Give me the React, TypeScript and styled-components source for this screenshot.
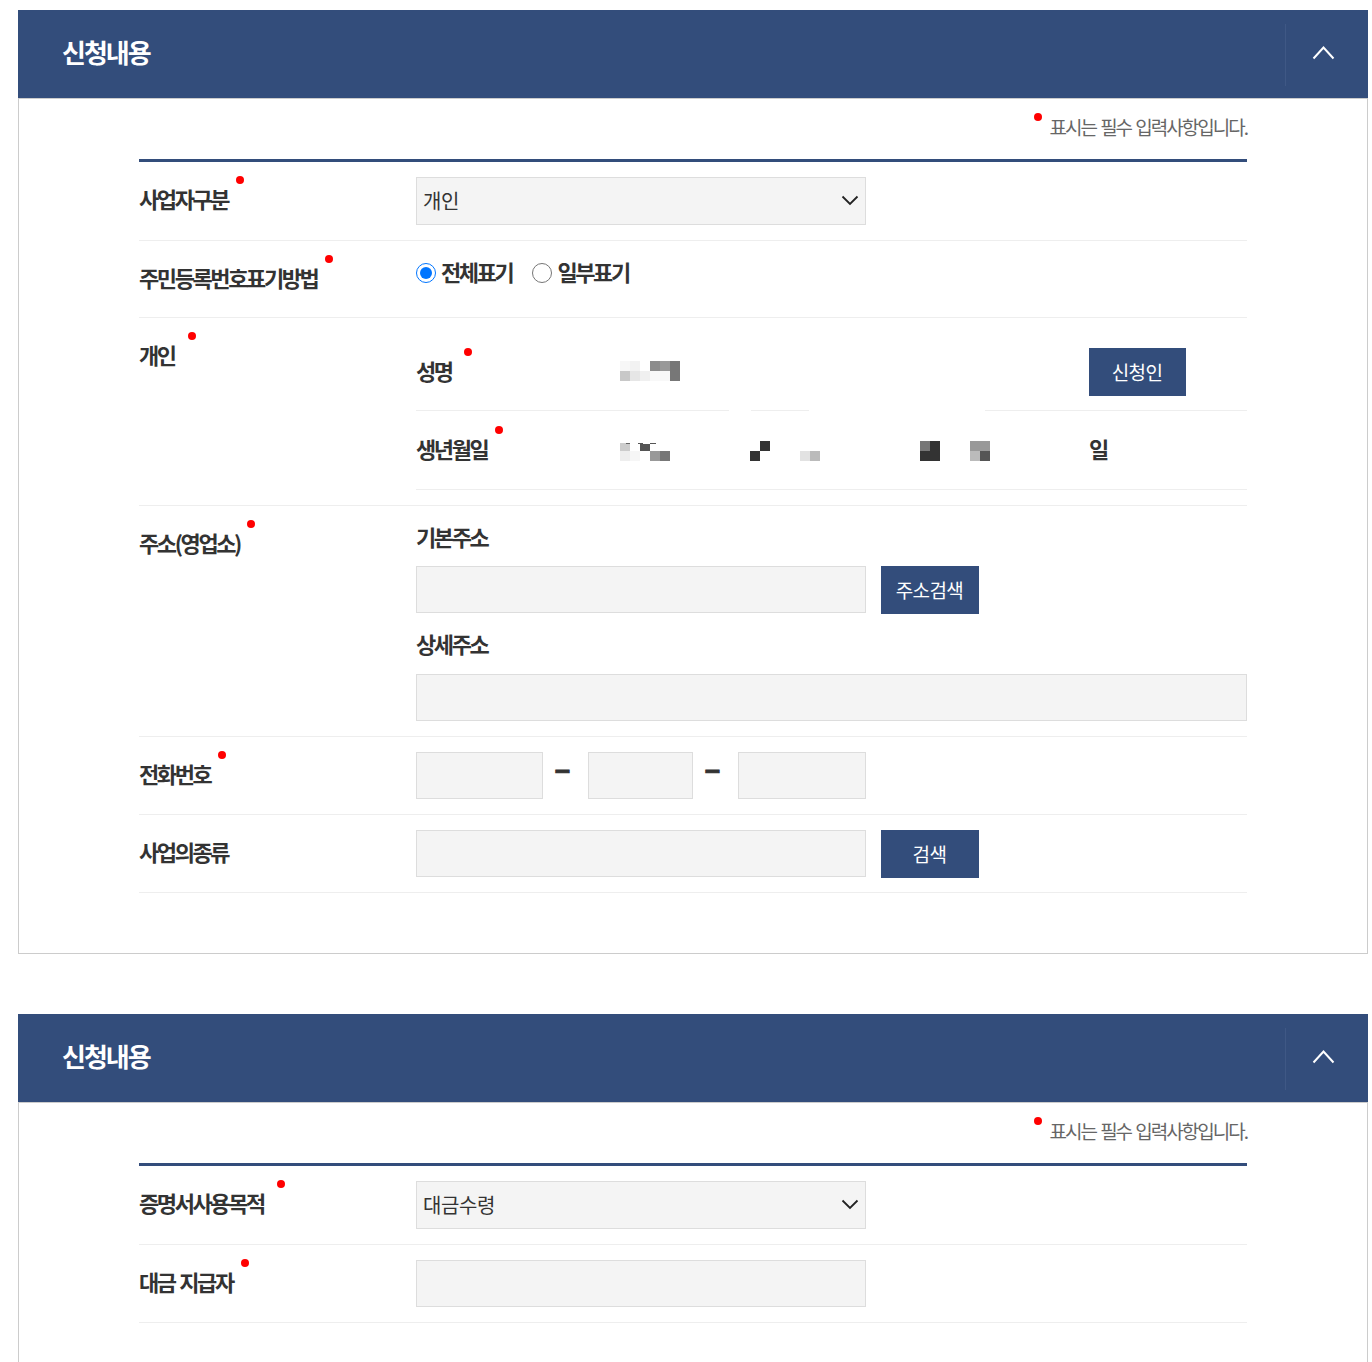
import React from "react";
import styled, { createGlobalStyle } from "styled-components";

const NAVY = "#334d7b";
const FONT = `"Noto Sans CJK KR", "Noto Sans", sans-serif`;

const Global = createGlobalStyle`
  html, body { margin: 0; padding: 0; height: 1362px; overflow: hidden; background: #fff; }
  body { font-family: ${FONT}; color: #333; }
  * { box-sizing: border-box; }
`;

const Page = styled.div`
  padding: 10px 4px 0 18px;
`;
const Section = styled.section`
  margin-bottom: 60px;
`;
const Header = styled.header`
  height: 88px;
  background: ${NAVY};
  display: flex;
  align-items: center;
  justify-content: space-between;
  padding-left: 44px;
`;
const Title = styled.h2`
  margin: 0 0 4px;
  font-size: 26px;
  font-weight: 700;
  letter-spacing: -2px;
  color: #fff;
  line-height: 1;
`;
const Toggle = styled.button`
  width: 83px;
  height: 62px;
  margin-top: 2px;
  padding: 0 8px 6px 0;
  background: transparent;
  border: 0;
  border-left: 1px solid #3f5885;
  display: flex;
  align-items: center;
  justify-content: center;
`;
const Body = styled.div`
  border: 1px solid #ccc;
  padding: 0 120px 60px;
`;
const Note = styled.p`
  margin: 0;
  height: 60px;
  display: flex;
  justify-content: flex-end;
  align-items: center;
  padding-bottom: 6px;
  font-size: 19px;
  letter-spacing: -2px;
  word-spacing: 2px;
  color: #666;
`;
const NoteText = styled.span`
  position: relative;
  &::before {
    content: "";
    position: absolute;
    left: -15px;
    top: 0;
    width: 8px;
    height: 8px;
    border-radius: 50%;
    background: #f00;
  }
`;
const Table = styled.div`
  border-top: 3px solid ${NAVY};
`;
const Row = styled.div`
  display: grid;
  grid-template-columns: 277px 1fr;
  border-bottom: 1px solid #eee;
`;
const Label = styled.div`
  padding-top: 20px;
  line-height: 32px;
  height: 52px;
`;
const LabelText = styled.span<{ $required?: boolean; $dot?: number }>`
  position: relative;
  display: inline-block;
  font-size: 22px;
  font-weight: 700;
  letter-spacing: -2.4px;
  word-spacing: 2px;
  color: #333;
  ${(p) =>
    p.$required &&
    `&::after {
      content: "";
      position: absolute;
      right: ${-(p.$dot ?? 16)}px;
      top: -6px;
      width: 8px;
      height: 8px;
      border-radius: 50%;
      background: #f00;
    }`}
`;
const Cell = styled.div`
  padding: 15px 0;
`;
const TightCell = styled(Cell)`
  padding-bottom: 14px;
`;
const RadioCell = styled.div`
  height: 76px;
  padding-top: 17px;
  display: flex;
  align-items: flex-start;
  gap: 20px;
`;
const RadioLabel = styled.label`
  display: flex;
  align-items: center;
  gap: 5px;
  height: 30px;
  font-size: 22px;
  font-weight: 700;
  letter-spacing: -2.4px;
  color: #333;
`;
const RadioText = styled.span`
  margin-bottom: 4px;
`;
const Radio = styled.input.attrs({ type: "radio" })`
  width: 20px;
  height: 20px;
  margin: 0;
  accent-color: #0075ff;
`;
const SelectWrap = styled.div`
  position: relative;
  width: 450px;
  height: 48px;
`;
const Select = styled.select`
  appearance: none;
  width: 100%;
  height: 100%;
  padding: 0 6px 2px;
  background: #f4f4f4;
  border: 1px solid #ddd;
  border-radius: 0;
  font-family: ${FONT};
  font-size: 20px;
  letter-spacing: -0.4px;
  color: #333;
`;
const SelectArrow = styled.svg`
  position: absolute;
  right: 7px;
  top: 18px;
  pointer-events: none;
`;
const Input = styled.input<{ $w?: number }>`
  display: block;
  width: ${(p) => (p.$w ? `${p.$w}px` : "100%")};
  height: 47px;
  background: #f4f4f4;
  border: 1px solid #ddd;
  border-radius: 0;
  padding: 0 8px;
  font-family: ${FONT};
  font-size: 20px;
`;
const Button = styled.button`
  width: 98px;
  height: 48px;
  padding: 0 1px 2px 0;
  background: ${NAVY};
  border: 0;
  border-radius: 0;
  color: #fff;
  font-family: ${FONT};
  font-size: 19px;
  letter-spacing: -0.6px;
`;
const FieldRow = styled.div`
  display: flex;
  align-items: flex-start;
  gap: 15px;
`;
const PhoneRow = styled.div`
  display: flex;
  align-items: flex-start;
`;
const Dash = styled.span`
  width: 45px;
  height: 30px;
  padding-right: 6px;
  display: flex;
  justify-content: center;
  align-items: center;
  font-size: 30px;
  font-weight: 700;
  line-height: 1;
  color: #333;
  -webkit-text-stroke: 1px #333;
`;
const NameRow = styled.div`
  display: flex;
  height: 93px;
`;
const Seg = styled.div<{ $w: number; $gap?: number }>`
  width: ${(p) => p.$w}px;
  margin-left: ${(p) => p.$gap ?? 0}px;
  border-bottom: 1px solid #eee;
  display: flex;
  align-items: flex-start;
`;
const SubLabel = styled.div`
  width: 204px;
  padding-top: 36px;
  line-height: 32px;
`;
const NameValue = styled.svg`
  margin-top: 43px;
`;
const ApplicantButton = styled(Button)`
  width: 97px;
  margin: 30px 0 0 104px;
`;
const BirthRow = styled.div`
  display: grid;
  grid-template-columns: 204px 130px 50px 120px 50px 119px auto;
  align-items: center;
  height: 79px;
  margin-bottom: 15px;
  padding-top: 1px;
  border-bottom: 1px solid #eee;
`;
const BirthLabel = styled.div`
  line-height: 32px;
  margin-bottom: 2px;
`;
const AddrCell = styled.div`
  padding: 14px 0 15px;
`;
const AddrLabel = styled.div<{ $top?: number; $bottom: number }>`
  margin-top: ${(p) => p.$top ?? 0}px;
  margin-bottom: ${(p) => p.$bottom}px;
  line-height: 32px;
`;

type Cellv = [number, number, string, number?, number?];
const Mosaic = ({ w, cells, as: Comp = "svg" as any }: { w: number; cells: Cellv[]; as?: any }) => (
  <Comp width={w} height={20} viewBox={`0 0 ${w} 20`} aria-hidden="true">
    {cells.map(([x, y, c, cw = 10, ch = 10], i) => (
      <rect key={i} x={x} y={y} width={cw} height={ch} fill={c} />
    ))}
  </Comp>
);
const BlockMosaic = styled.svg`
  display: block;
`;

const Chevron = () => (
  <SelectArrow width="18" height="11" viewBox="0 0 18 11" fill="none">
    <path d="M1.5 1.5 9 9l7.5-7.5" stroke="#222" strokeWidth="1.8" />
  </SelectArrow>
);
const Up = () => (
  <svg width="23" height="15" viewBox="0 0 23 15" fill="none">
    <path d="M1.5 13.5 11.5 2.5l10 11" stroke="#fff" strokeWidth="2" />
  </svg>
);

const Head = () => (
  <Header>
    <Title>신청내용</Title>
    <Toggle aria-label="접기">
      <Up />
    </Toggle>
  </Header>
);

const Req = ({ children, dot }: { children: React.ReactNode; dot?: number }) => (
  <Label>
    <LabelText $required $dot={dot}>
      {children}
    </LabelText>
  </Label>
);

export default function App() {
  return (
    <Page>
      <Global />
      <Section>
        <Head />
        <Body>
          <Note>
            <NoteText>표시는 필수 입력사항입니다.</NoteText>
          </Note>
          <Table>
            <Row>
              <Req>사업자구분</Req>
              <Cell>
                <SelectWrap>
                  <Select defaultValue="개인">
                    <option>개인</option>
                  </Select>
                  <Chevron />
                </SelectWrap>
              </Cell>
            </Row>
            <Row>
              <Req>주민등록번호표기방법</Req>
              <RadioCell>
                <RadioLabel>
                  <Radio name="mark" defaultChecked />
                  <RadioText>전체표기</RadioText>
                </RadioLabel>
                <RadioLabel>
                  <Radio name="mark" />
                  <RadioText>일부표기</RadioText>
                </RadioLabel>
              </RadioCell>
            </Row>
            <Row>
              <Req dot={21}>개인</Req>
              <div>
                <NameRow>
                  <Seg $w={313}>
                    <SubLabel>
                      <LabelText $required $dot={20}>
                        성명
                      </LabelText>
                    </SubLabel>
                    <Mosaic
                      as={NameValue}
                      w={60}
                      cells={[
                        [0, 0, "#f7f7f7"],
                        [10, 0, "#f2f2f2"],
                        [30, 0, "#8c8c8c"],
                        [40, 0, "#999999"],
                        [50, 0, "#777777", 10, 20],
                        [0, 10, "#c8c8c8"],
                        [10, 10, "#e6e6e6"],
                        [20, 10, "#f0f0f0"],
                        [30, 10, "#f8f8f8", 20],
                      ]}
                    />
                  </Seg>
                  <Seg $w={58} $gap={22} />
                  <Seg $w={262} $gap={176}>
                    <ApplicantButton>신청인</ApplicantButton>
                  </Seg>
                </NameRow>
                <BirthRow>
                  <BirthLabel>
                    <LabelText $required>생년월일</LabelText>
                  </BirthLabel>
                  <Mosaic
                    as={BlockMosaic}
                    w={50}
                    cells={[
                      [0, 2, "#cccccc", 10, 8],
                      [6, 2, "#666666", 4, 1],
                      [0, 10, "#eeeeee"],
                      [10, 10, "#f6f6f6"],
                      [18, 2, "#555555", 5, 1],
                      [30, 2, "#555555", 6, 1],
                      [20, 3, "#555555", 10, 7],
                      [30, 10, "#999999"],
                      [40, 10, "#777777"],
                    ]}
                  />
                  <Mosaic
                    as={BlockMosaic}
                    w={20}
                    cells={[
                      [0, 10, "#333333"],
                      [10, 0, "#333333"],
                    ]}
                  />
                  <Mosaic
                    as={BlockMosaic}
                    w={20}
                    cells={[
                      [0, 10, "#e2e2e2"],
                      [10, 10, "#bbbbbb"],
                    ]}
                  />
                  <Mosaic
                    as={BlockMosaic}
                    w={20}
                    cells={[
                      [0, 0, "#777777"],
                      [10, 0, "#333333"],
                      [0, 10, "#333333", 20],
                    ]}
                  />
                  <Mosaic
                    as={BlockMosaic}
                    w={20}
                    cells={[
                      [0, 0, "#999999", 20],
                      [0, 10, "#bbbbbb"],
                      [10, 10, "#555555"],
                    ]}
                  />
                  <BirthLabel>
                    <LabelText>일</LabelText>
                  </BirthLabel>
                </BirthRow>
              </div>
            </Row>
            <Row>
              <Req dot={15}>주소(영업소)</Req>
              <AddrCell>
                <AddrLabel $bottom={11}>
                  <LabelText>기본주소</LabelText>
                </AddrLabel>
                <FieldRow>
                  <Input $w={450} />
                  <Button>주소검색</Button>
                </FieldRow>
                <AddrLabel $top={13} $bottom={12}>
                  <LabelText>상세주소</LabelText>
                </AddrLabel>
                <Input />
              </AddrCell>
            </Row>
            <Row>
              <Req>전화번호</Req>
              <Cell>
                <PhoneRow>
                  <Input $w={127} />
                  <Dash>–</Dash>
                  <Input $w={105} />
                  <Dash>–</Dash>
                  <Input $w={128} />
                </PhoneRow>
              </Cell>
            </Row>
            <Row>
              <Label>
                <LabelText>사업의종류</LabelText>
              </Label>
              <TightCell>
                <FieldRow>
                  <Input $w={450} />
                  <Button>검색</Button>
                </FieldRow>
              </TightCell>
            </Row>
          </Table>
        </Body>
      </Section>
      <Section>
        <Head />
        <Body>
          <Note>
            <NoteText>표시는 필수 입력사항입니다.</NoteText>
          </Note>
          <Table>
            <Row>
              <Req dot={21}>증명서사용목적</Req>
              <Cell>
                <SelectWrap>
                  <Select defaultValue="대금수령">
                    <option>대금수령</option>
                  </Select>
                  <Chevron />
                </SelectWrap>
              </Cell>
            </Row>
            <Row>
              <Req>대금 지급자</Req>
              <Cell>
                <Input $w={450} />
              </Cell>
            </Row>
          </Table>
        </Body>
      </Section>
    </Page>
  );
}
